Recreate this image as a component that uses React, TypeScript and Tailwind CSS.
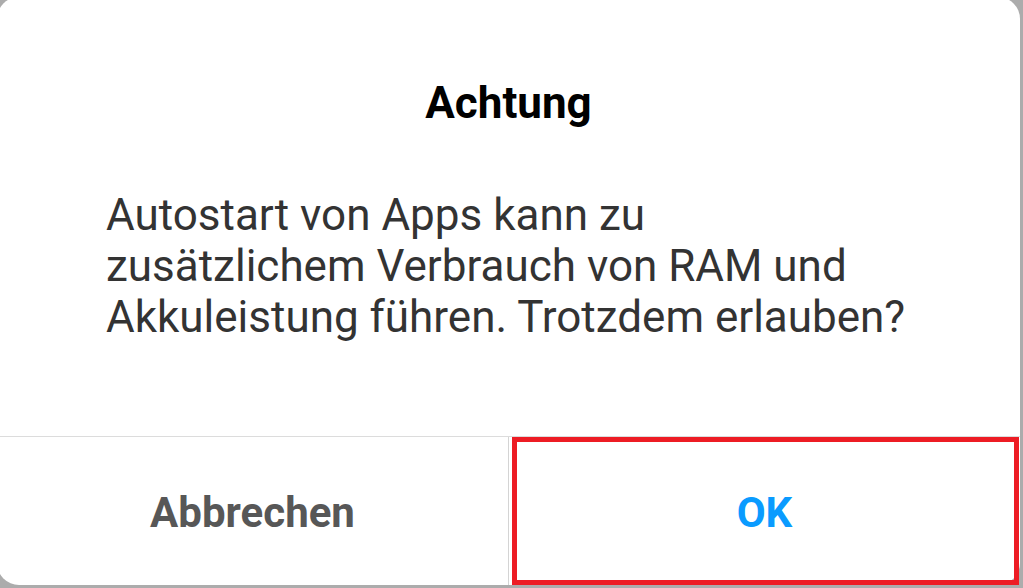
export default function App() {
  return (
    <div
      className="relative h-[588px] w-[1023px] overflow-hidden bg-[#acacac]"
      style={{ fontFamily: "Roboto, 'Noto Sans', sans-serif" }}
    >
      <div className="-ml-[3px] -mt-[3px] flex h-[588px] w-[1023px] flex-col overflow-hidden rounded-[22px] bg-white">
        <div className="flex-1">
          <h1 className="mt-[80px] text-center text-[44px] font-bold leading-[52px] text-black">
            Achtung
          </h1>
          <p className="mt-[61px] pl-[109px] pr-[90px] text-[44px] leading-[51px] text-[#333333]">
            Autostart von Apps kann zu
            <br />
            zusätzlichem Verbrauch von RAM und
            <br />
            Akkuleistung führen. Trotzdem erlauben?
          </p>
        </div>
        <div className="flex h-[149px] border-t border-[#dcdcdc]">
          <button className="w-[512px] border-r border-[#d4d4d4] pt-[3px] text-[42px] font-bold text-[#575757]">
            Abbrechen
          </button>
          <button className="flex-1 pt-[3px] text-[42px] font-bold text-[#0a9bff]">
            OK
          </button>
        </div>
      </div>
      <div className="pointer-events-none absolute left-[512px] top-[437px] h-[148px] w-[507px] border-[5px] border-[#ed1c24]" />
    </div>
  );
}
